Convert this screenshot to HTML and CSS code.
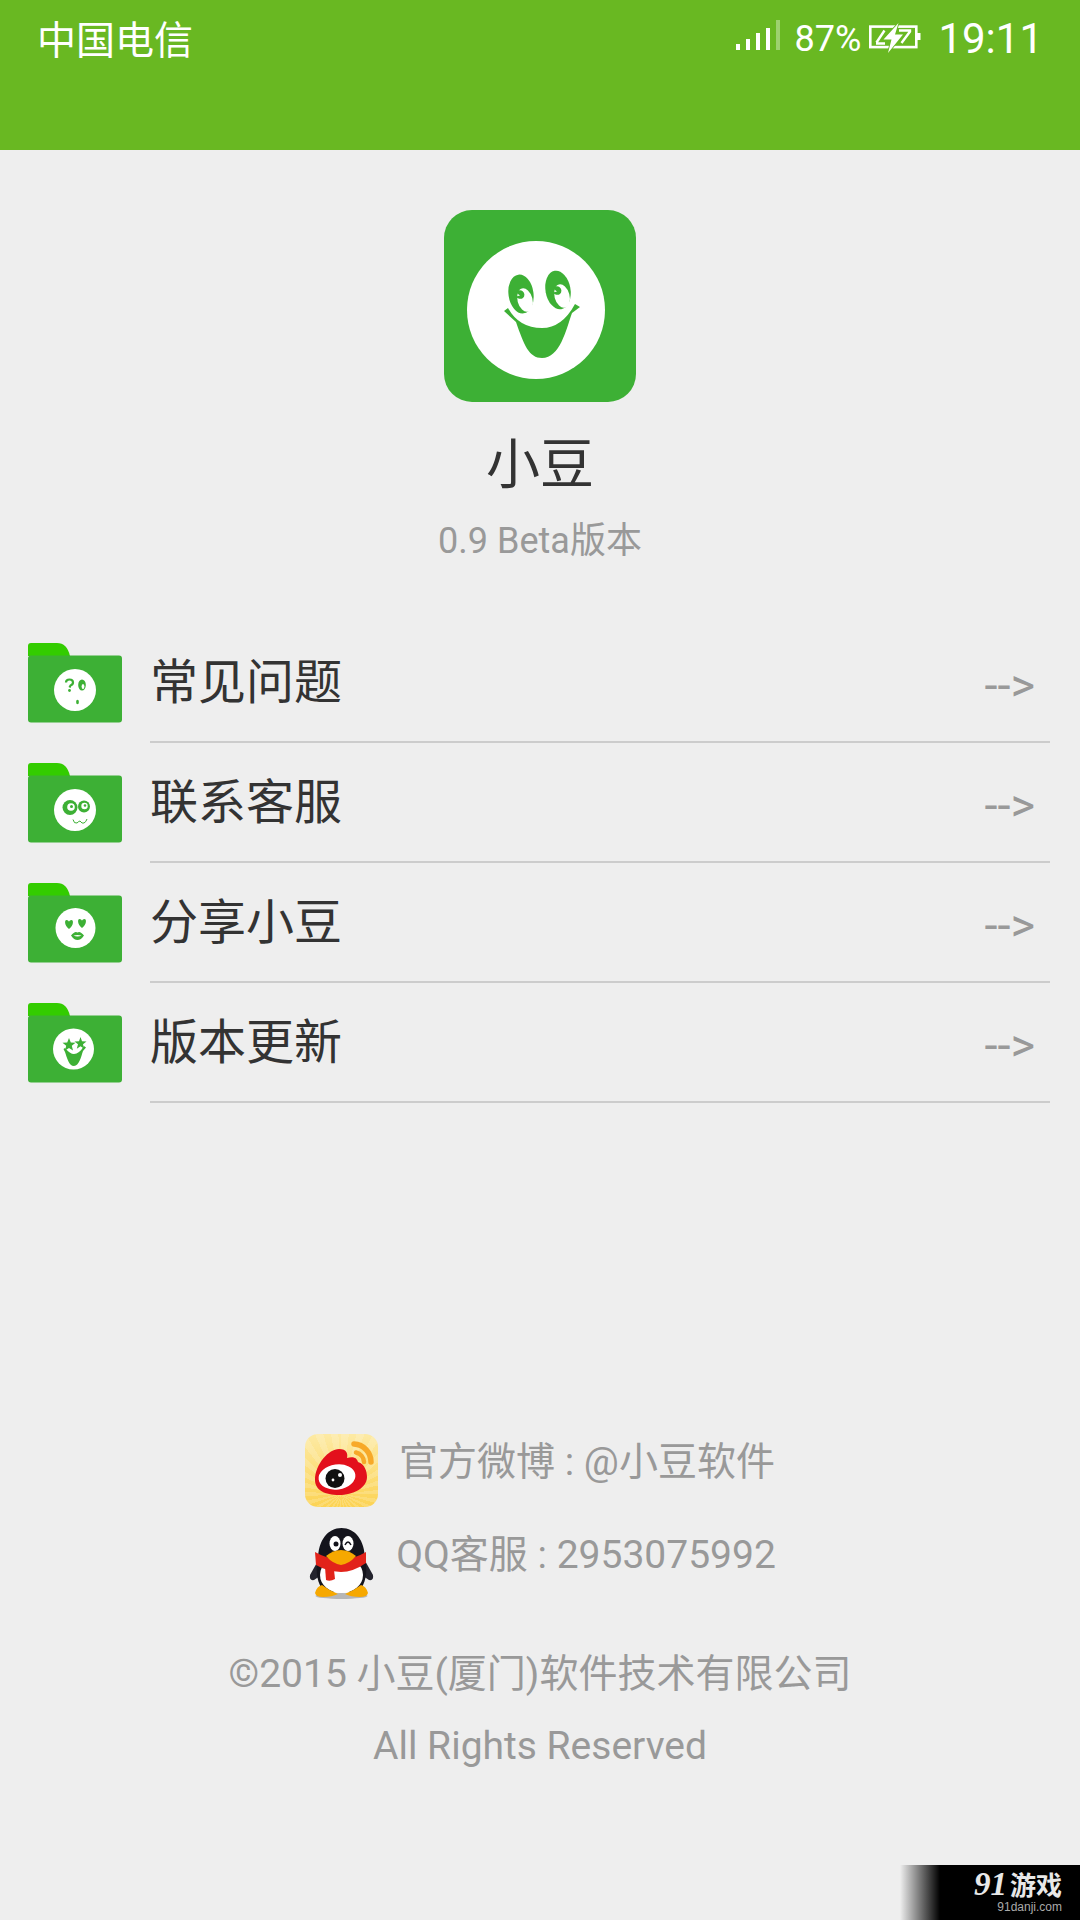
FILE: index.html
```html
<!DOCTYPE html>
<html lang="zh">
<head>
<meta charset="utf-8">
<title>小豆</title>
<link rel="stylesheet" href="styles.css">
</head>
<body>
<div class="page">
  <header class="topbar">
    <div class="carrier">中国电信</div>
    <div class="status">
      <svg class="signal" width="44" height="31" viewBox="0 0 44 31">
        <rect x="0" y="24" width="4" height="6" fill="#fff"/>
        <rect x="10" y="19" width="4" height="11" fill="#fff"/>
        <rect x="20" y="13" width="4" height="17" fill="#fff"/>
        <rect x="30" y="8" width="4" height="22" fill="#fff"/>
        <rect x="40" y="0" width="4" height="30" fill="#fff" opacity=".35"/>
      </svg>
      <span class="pct">87%</span>
      <svg class="batt" width="52" height="31" viewBox="0 0 52 31">
        <rect x="1.300" y="3.600" width="46" height="20.500" fill="none" stroke="#fff" stroke-width="2.600"/>
        <rect x="48" y="10" width="3.500" height="7" fill="#fff"/>
        <path d="M7 20.500H16M7.500 19.500L15.500 7.500" fill="none" stroke="#fff" stroke-width="2.400"/>
        <path d="M30 7.500H41V8.500L32.500 20" fill="none" stroke="#fff" stroke-width="2.400"/>
        <path d="M29.500 0L14.500 16.500H22.500L19 30L34 11.500H26Z" fill="#fff" stroke="#69b822" stroke-width="1.800" paint-order="stroke"/>
      </svg>
      <span class="clock">19:11</span>
    </div>
  </header>

  <section class="about">
    <svg class="logo" width="192" height="192" viewBox="0 0 192 192">
      <rect width="192" height="192" rx="28" fill="#3db035"/>
      <circle cx="92" cy="100" r="69" fill="#fff"/>
      <ellipse cx="77" cy="84" rx="12.500" ry="19.500" transform="rotate(-8 77 84)" fill="#3db035"/>
      <ellipse cx="114" cy="80" rx="12.500" ry="19.500" transform="rotate(-10 114 80)" fill="#3db035"/>
      <ellipse cx="81" cy="90" rx="7.500" ry="12" transform="rotate(-15 81 90)" fill="#fff"/>
      <ellipse cx="118" cy="86" rx="7.500" ry="12" transform="rotate(-15 118 86)" fill="#fff"/>
      <path d="M72 82.500a4.500 4.500 0 1 1 7 5.500a5 5 0 0 1-7-1.500l4-1z" fill="#3db035"/>
      <path d="M109 78.500a4.500 4.500 0 1 1 7 5.500a5 5 0 0 1-7-1.500l4-1z" fill="#3db035"/>
      <path d="M60 101L64 98Q75 118 98 118Q118 118 131 94L136 97L128 103C122 120 116 148 98 148C85 148 80 135 72 112Z" fill="#3db035"/>
    </svg>
    <h1 class="app-name">小豆</h1>
    <p class="version">0.9 Beta版本</p>
  </section>

  <section class="menu">
    <div class="menu-row">
      <svg class="folder" width="94" height="80" viewBox="0 0 94 80">
        <path d="M0 12V3Q0 0 3 0H29Q39 0 42 13H0Z" fill="#33cc00"/>
        <rect x="0" y="12.500" width="94" height="67" rx="3" fill="#3db035"/>
        <circle cx="47" cy="47" r="21" fill="#fff"/>
        <path d="M38 39.500Q38 36.500 41.500 36.500Q45 36.500 45 39.500Q45 41.500 42.500 42.500L41.500 44.500" fill="none" stroke="#3db035" stroke-width="2.200"/>
        <circle cx="41.500" cy="47.500" r="1.400" fill="#3db035"/>
        <ellipse cx="54" cy="42" rx="3.800" ry="5.500" fill="#3db035"/>
        <ellipse cx="55" cy="43.500" rx="1.400" ry="2.500" fill="#fff"/>
        <ellipse cx="49.500" cy="59" rx="1.400" ry="2.200" fill="#3db035"/>
      </svg>
      <div class="menu-body"><span class="menu-label">常见问题</span><span class="menu-arrow">--&gt;</span></div>
    </div>
    <div class="menu-row">
      <svg class="folder" width="94" height="80" viewBox="0 0 94 80">
        <path d="M0 12V3Q0 0 3 0H29Q39 0 42 13H0Z" fill="#33cc00"/>
        <rect x="0" y="12.500" width="94" height="67" rx="3" fill="#3db035"/>
        <circle cx="47" cy="47" r="21" fill="#fff"/>
        <circle cx="42" cy="44.500" r="7.500" fill="#3db035"/>
        <circle cx="43" cy="44" r="3.800" fill="#fff"/>
        <circle cx="43.500" cy="43.500" r="1.500" fill="#3db035"/>
        <circle cx="56" cy="43.500" r="6" fill="#3db035"/>
        <circle cx="56.500" cy="43" r="3.200" fill="#fff"/>
        <circle cx="57" cy="42.500" r="1.300" fill="#3db035"/>
        <path d="M45 56.500Q46 61 49 60Q51 58 52 58Q54 61 56 60Q58 59 59 56" fill="none" stroke="#3db035" stroke-width="1"/>
      </svg>
      <div class="menu-body"><span class="menu-label">联系客服</span><span class="menu-arrow">--&gt;</span></div>
    </div>
    <div class="menu-row">
      <svg class="folder" width="94" height="80" viewBox="0 0 94 80">
        <path d="M0 12V3Q0 0 3 0H29Q39 0 42 13H0Z" fill="#33cc00"/>
        <rect x="0" y="12.500" width="94" height="67" rx="3" fill="#3db035"/>
        <circle cx="47.500" cy="45" r="20" fill="#fff"/>
        <path d="M41 46C36 42 36.500 37 38.500 37C40 37 41 38 41 39C41 38 42 37 43.500 37C45.500 37 46 42 41 46Z" fill="#3db035"/>
        <path d="M54 45C49 41 49.500 36 51.500 36C53 36 54 37 54 38C54 37 55 36 56.500 36C58.500 36 59 41 54 45Z" fill="#3db035"/>
        <path d="M43 52.500Q47 47.500 49.500 49.500Q52 47.500 56 52.500Q53 57 49.500 57Q46 57 43 52.500Z" fill="#3db035"/>
        <path d="M45.500 52.500Q49.500 51.500 53.500 52.500Q49.500 54.500 45.500 52.500Z" fill="#fff"/>
      </svg>
      <div class="menu-body"><span class="menu-label">分享小豆</span><span class="menu-arrow">--&gt;</span></div>
    </div>
    <div class="menu-row">
      <svg class="folder" width="94" height="80" viewBox="0 0 94 80">
        <path d="M0 12V3Q0 0 3 0H29Q39 0 42 13H0Z" fill="#33cc00"/>
        <rect x="0" y="12.500" width="94" height="67" rx="3" fill="#3db035"/>
        <circle cx="45.500" cy="46" r="20.500" fill="#fff"/>
        <path d="M41 35L42.800 39.500L47.500 39.800L43.800 42.800L45 47.500L41 44.900L37 47.500L38.200 42.800L34.500 39.800L39.200 39.500Z" fill="#3db035"/>
        <path d="M52.500 34L54 38.300L58.500 38.500L55 41.300L56.200 45.700L52.500 43.200L48.800 45.700L50 41.300L46.500 38.500L51 38.300Z" fill="#3db035"/>
        <path d="M35.500 46L37 45Q42 51 46 51Q51 51 56 43L58 44.500L55 48C53 54 51 63 46 63C41 63 39 55 37 49Z" fill="#3db035"/>
      </svg>
      <div class="menu-body"><span class="menu-label">版本更新</span><span class="menu-arrow">--&gt;</span></div>
    </div>
  </section>

  <footer class="footer">
    <div class="contact">
      <svg class="weibo" width="73" height="73" viewBox="0 0 73 73">
        <path d="M10 46C10 30 24 15 34 15C42 15 43 20 42 24C50 22 52 25 53 28C60 30 62 38 62 43C62 54 48 61 34 61C20 61 10 56 10 46Z" fill="#e3101c"/>
        <ellipse cx="32" cy="43" rx="18.500" ry="12.500" fill="#fff" transform="rotate(-8 32 43)"/>
        <circle cx="30" cy="44.500" r="9.500" fill="#111"/>
        <circle cx="35" cy="41" r="2" fill="#fff"/>
        <circle cx="28" cy="46" r="1.400" fill="#fff"/>
        <path d="M49 10A18 18 0 0 1 66 28" fill="none" stroke="#f7a928" stroke-width="5.500" stroke-linecap="round"/>
        <path d="M51 18.500A10 10 0 0 1 59 28" fill="none" stroke="#f7a928" stroke-width="4.500" stroke-linecap="round"/>
      </svg>
      <span class="contact-text">官方微博 : @小豆软件</span>
    </div>
    <div class="contact contact-qq">
      <svg class="penguin" width="67" height="75" viewBox="0 0 67 75">
        <ellipse cx="33.500" cy="71" rx="26" ry="3" fill="#888" opacity=".55"/>
        <path d="M11 34L2 50Q1 56 6 55L15 49ZM56 34L65 50Q66 56 61 55L52 49Z" fill="#23232d"/>
        <path d="M10 35C10 15 20 3 33.500 3C47 3 57 15 57 35C60 45 58 60 50 67H17C9 60 7 45 10 35Z" fill="#14141c"/>
        <ellipse cx="33.500" cy="50" rx="21.500" ry="18" fill="#fff"/>
        <ellipse cx="27" cy="18.500" rx="5.500" ry="7.500" fill="#fff"/>
        <ellipse cx="40" cy="18.500" rx="5.500" ry="7.500" fill="#fff"/>
        <circle cx="28" cy="19" r="2.500" fill="#14141c"/>
        <path d="M37 20Q40 14 43 20" fill="none" stroke="#14141c" stroke-width="1.500"/>
        <path d="M7 27Q33 42 58 27L58 38Q45 47 33 47Q18 46 8 40Z" fill="#e2231a"/>
        <path d="M17 42L26 45L27 54Q22 57 18 55Z" fill="#e2231a"/>
        <path d="M18 31Q25 25 33 25Q41 25 48 31Q41 39 33 40Q25 39 18 31Z" fill="#f6a800"/>
        <path d="M7 68Q9 61 14 60Q22 66 30 69Q24 72 15 72Q8 72 7 68Z" fill="#f6a800"/>
        <path d="M60 68Q58 61 53 60Q45 66 37 69Q43 72 52 72Q59 72 60 68Z" fill="#f6a800"/>
      </svg>
      <span class="contact-text contact-text-qq">QQ客服 : 2953075992</span>
    </div>
    <p class="copy copy-first">©2015 小豆(厦门)软件技术有限公司</p>
    <p class="copy">All Rights Reserved</p>
  </footer>

  <div class="watermark">
    <div class="wm-inner">
      <div class="wm-brand"><span class="wm-num">91</span>游戏</div>
      <div class="wm-url">91danji.com</div>
    </div>
  </div>
</div>
</body>
</html>
```

FILE: styles.css
```css
* { box-sizing: border-box; }
html, body { margin: 0; padding: 0; }
body {
  background: #eeeeee;
  font-family: Roboto, "Noto Sans CJK SC", sans-serif;
  color: #333;
}
.page {
  position: relative;
  width: 1080px;
  height: 1920px;
  overflow: hidden;
  display: flex;
  flex-direction: column;
}
.topbar {
  height: 150px;
  background: #69b822;
  color: #fff;
  display: flex;
  align-items: flex-start;
  justify-content: space-between;
  padding: 0 37px 0 37px;
  flex: none;
}
.carrier {
  font-size: 39px;
  line-height: 74px;
  font-family: "Noto Sans CJK SC", sans-serif;
}
.status {
  display: flex;
  align-items: flex-start;
}
.signal { margin: 20px 15px 0 0; }
.pct { font-size: 36px; line-height: 79px; }
.batt { margin: 23px 17px 0 8px; }
.clock { font-size: 42px; line-height: 78px; font-weight: 400; }

.about {
  padding-top: 60px;
  display: flex;
  flex-direction: column;
  align-items: center;
  flex: none;
}
.logo { display: block; }
.app-name {
  margin: 29px 0 0;
  font-size: 54px;
  line-height: 70px;
  font-weight: 400;
  color: #333;
}
.version {
  margin: 15px 0 0;
  font-size: 36px;
  line-height: 50px;
  color: #999;
}

.menu { margin-top: 57px; flex: none; }
.menu-row {
  display: flex;
  height: 120px;
  padding-left: 28px;
}
.folder { flex: none; align-self: center; margin: 0 28px 0 0; }
.menu-body {
  flex: 1;
  margin-right: 30px;
  border-bottom: 2px solid #cccccc;
  display: flex;
  align-items: center;
  justify-content: space-between;
  padding-right: 15px;
}
.menu-label { font-size: 48px; color: #333; margin-bottom: 8px; }
.menu-arrow { font-size: 47px; color: #999; margin-top: 4px; }

.footer { margin-top: 331px; flex: none; }
.contact {
  display: flex;
  justify-content: center;
  align-items: flex-start;
  gap: 21px;
  height: 73px;
}
.contact-qq { margin-top: 18px; height: 75px; padding-left: 4px; }
.contact-text { font-size: 39px; line-height: 56px; color: #999; }
.contact-text-qq { line-height: 60px; }
.weibo {
  flex: none;
  border-radius: 13px;
  background:
    repeating-conic-gradient(from 0deg at 50% 82%, rgba(255,255,255,.16) 0 7deg, rgba(255,255,255,0) 7deg 14deg),
    linear-gradient(to bottom, #fdeaa4, #fcd354);
}
.penguin { flex: none; }
.copy {
  margin: 0;
  text-align: center;
  font-size: 39px;
  line-height: 72px;
  color: #999;
}
.copy-first { margin-top: 38px; }

.watermark {
  position: absolute;
  right: 0;
  bottom: 0;
  width: 180px;
  height: 55px;
  background: linear-gradient(to right, rgba(0,0,0,0) 0, #000 40px);
}
.wm-inner {
  position: absolute;
  right: 18px;
  top: 3px;
  text-align: right;
}
.wm-brand {
  font-family: "Noto Sans CJK SC", sans-serif;
  font-weight: 700;
  font-size: 26px;
  line-height: 32px;
  color: #e8e8e8;
  white-space: nowrap;
}
.wm-num {
  font-family: "Liberation Serif", serif;
  font-style: italic;
  font-size: 33px;
  margin-right: 3px;
}
.wm-url {
  font-family: "Liberation Sans", sans-serif;
  font-size: 12px;
  line-height: 15px;
  color: #aaa;
}
```
